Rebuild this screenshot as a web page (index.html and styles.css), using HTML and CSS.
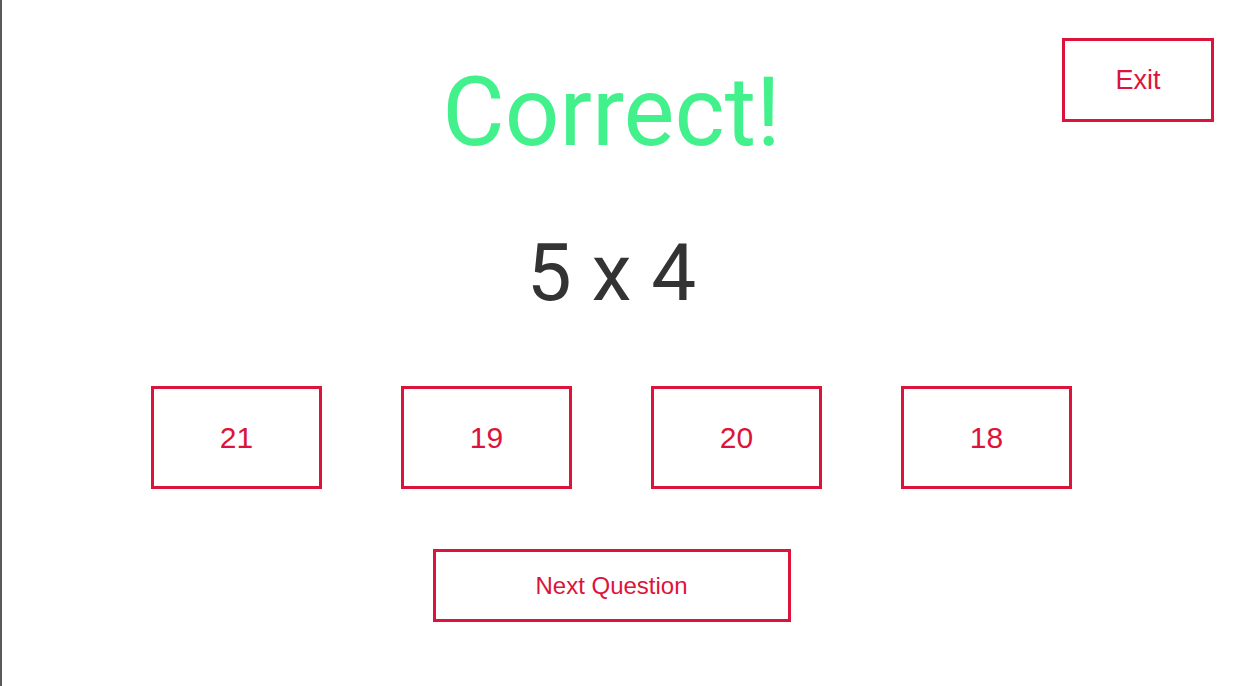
FILE: index.html
```html
<!DOCTYPE html>
<html lang="en">
<head>
<meta charset="utf-8">
<title>Quiz</title>
<link rel="stylesheet" href="styles.css">
</head>
<body>
<div class="app">
  <div class="top">
    <div class="spacer"></div>
    <h1 class="result">Correct!</h1>
    <button class="btn exit">Exit</button>
  </div>
  <div class="question">5 x 4</div>
  <div class="answers">
    <button class="btn answer">21</button>
    <button class="btn answer">19</button>
    <button class="btn answer">20</button>
    <button class="btn answer">18</button>
  </div>
  <div class="next-row">
    <button class="btn next">Next Question</button>
  </div>
</div>
</body>
</html>
```
FILE: styles.css
```css
html, body {
  margin: 0;
  padding: 0;
  background: #ffffff;
}
.app {
  box-sizing: border-box;
  min-height: 100vh;
  border-left: 2px solid #5a5a5a;
  padding: 38px 32px 0 0;
  display: flex;
  flex-direction: column;
  align-items: stretch;
  font-family: "Liberation Sans", Arial, sans-serif;
}
.top {
  display: grid;
  grid-template-columns: 1fr auto 1fr;
  align-items: start;
}
.result {
  margin: 18px 0 0 0;
  font-family: Roboto, "Liberation Sans", sans-serif;
  font-weight: 400;
  font-size: 96px;
  line-height: normal;
  color: #42f18b;
  text-align: center;
}
.btn {
  box-sizing: border-box;
  background: #ffffff;
  border: 3px solid #dc143c;
  color: #dc143c;
  font-family: "Liberation Sans", Arial, sans-serif;
  padding: 0;
  margin: 0;
  display: flex;
  align-items: center;
  justify-content: center;
}
.exit {
  justify-self: end;
  margin-right: 7px;
  width: 152px;
  height: 84px;
  font-size: 27px;
}
.question {
  margin-top: 58px;
  font-family: Roboto, "Liberation Sans", sans-serif;
  font-size: 80px;
  line-height: normal;
  color: #333333;
  text-align: center;
}
.answers {
  margin-top: 66px;
  display: flex;
  justify-content: center;
  gap: 79px;
}
.answer {
  width: 171px;
  height: 103px;
  font-size: 30px;
}
.next-row {
  margin-top: 60px;
  display: flex;
  justify-content: center;
}
.next {
  width: 358px;
  height: 73px;
  font-size: 24px;
}
```
